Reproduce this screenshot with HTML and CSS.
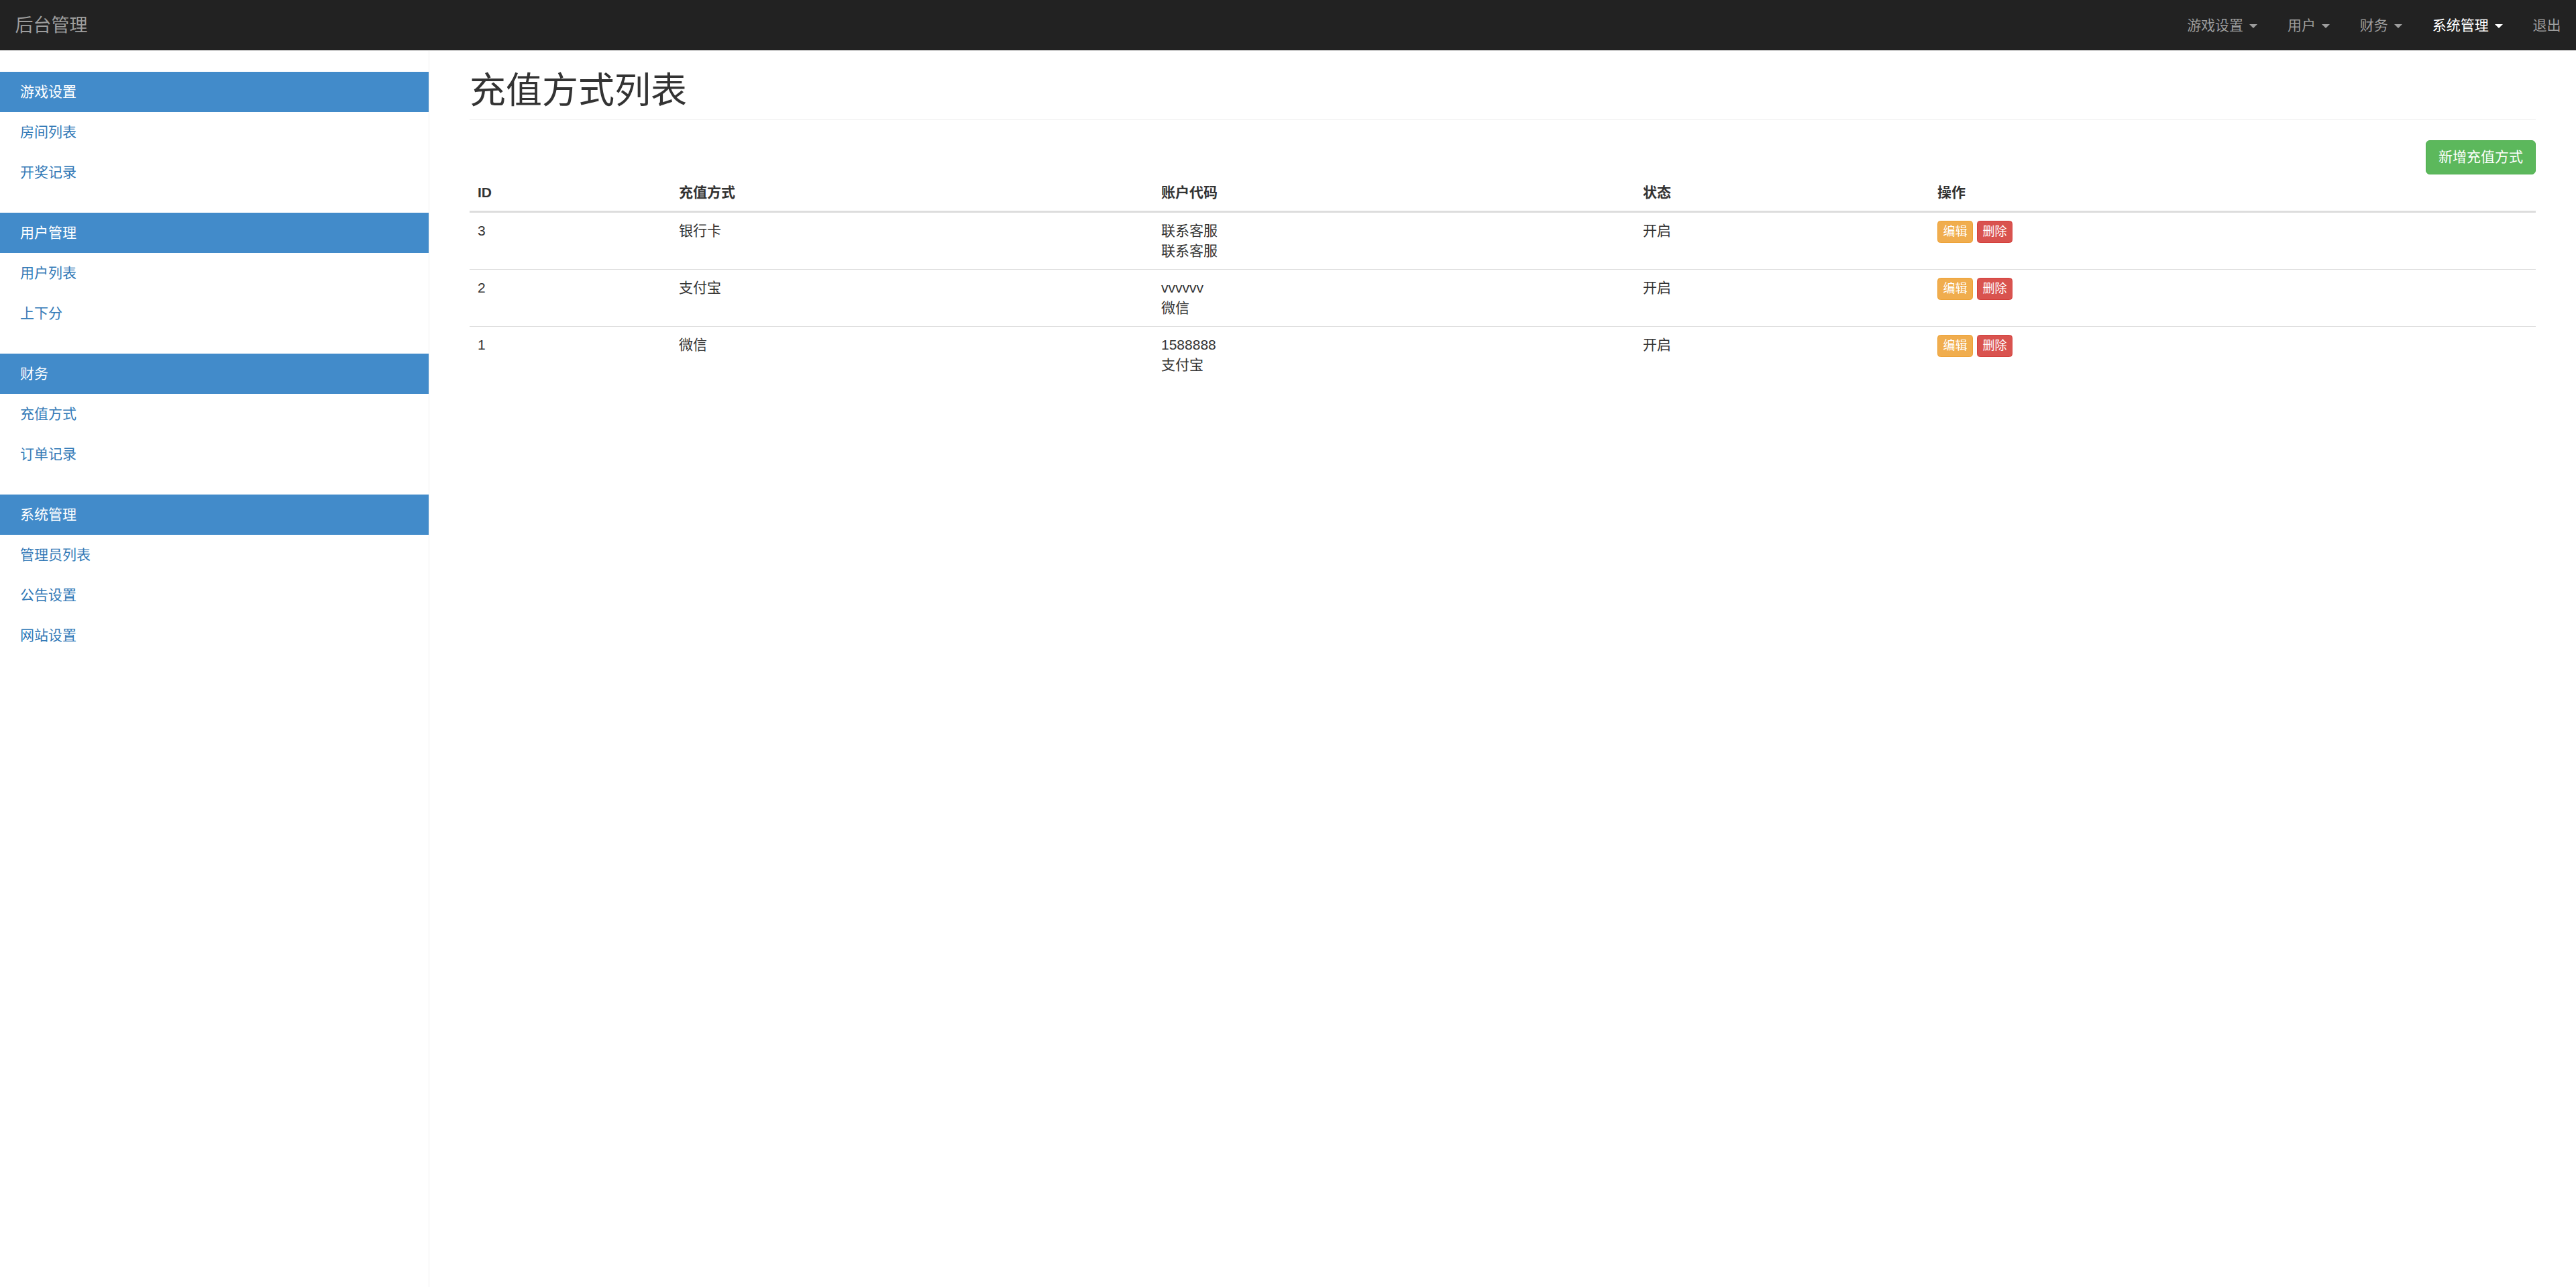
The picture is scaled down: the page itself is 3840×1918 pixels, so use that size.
FILE: index.html
```html
<!DOCTYPE html>
<html lang="zh-CN">
<head>
<meta charset="utf-8">
<title>后台管理</title>
<link rel="stylesheet" href="styles.css">
</head>
<body>
<header class="navbar">
  <a class="brand" href="#">后台管理</a>
  <ul class="nav-right">
    <li><a href="#">游戏设置 <span class="caret"></span></a></li>
    <li><a href="#">用户 <span class="caret"></span></a></li>
    <li><a href="#">财务 <span class="caret"></span></a></li>
    <li><a class="active" href="#">系统管理 <span class="caret"></span></a></li>
    <li><a href="#">退出</a></li>
  </ul>
</header>
<div class="layout">
  <aside class="sidebar">
    <ul class="side-group">
      <li class="side-header">游戏设置</li>
      <li><a href="#">房间列表</a></li>
      <li><a href="#">开奖记录</a></li>
    </ul>
    <ul class="side-group">
      <li class="side-header">用户管理</li>
      <li><a href="#">用户列表</a></li>
      <li><a href="#">上下分</a></li>
    </ul>
    <ul class="side-group">
      <li class="side-header">财务</li>
      <li><a href="#">充值方式</a></li>
      <li><a href="#">订单记录</a></li>
    </ul>
    <ul class="side-group">
      <li class="side-header">系统管理</li>
      <li><a href="#">管理员列表</a></li>
      <li><a href="#">公告设置</a></li>
      <li><a href="#">网站设置</a></li>
    </ul>
  </aside>
  <main class="main">
    <h1 class="page-header">充值方式列表</h1>
    <div class="toolbar">
      <a class="btn btn-success" href="#">新增充值方式</a>
    </div>
    <table class="table">
      <thead>
        <tr>
          <th class="c1">ID</th>
          <th class="c2">充值方式</th>
          <th class="c3">账户代码</th>
          <th class="c4">状态</th>
          <th class="c5">操作</th>
        </tr>
      </thead>
      <tbody>
        <tr>
          <td>3</td>
          <td>银行卡</td>
          <td>联系客服<br>联系客服</td>
          <td>开启</td>
          <td><span class="actions"><a class="btn-xs btn-warning" href="#">编辑</a><a class="btn-xs btn-danger" href="#">删除</a></span></td>
        </tr>
        <tr>
          <td>2</td>
          <td>支付宝</td>
          <td>vvvvvv<br>微信</td>
          <td>开启</td>
          <td><span class="actions"><a class="btn-xs btn-warning" href="#">编辑</a><a class="btn-xs btn-danger" href="#">删除</a></span></td>
        </tr>
        <tr>
          <td>1</td>
          <td>微信</td>
          <td>1588888<br>支付宝</td>
          <td>开启</td>
          <td><span class="actions"><a class="btn-xs btn-warning" href="#">编辑</a><a class="btn-xs btn-danger" href="#">删除</a></span></td>
        </tr>
      </tbody>
    </table>
  </main>
</div>
</body>
</html>
```

FILE: styles.css
```css
* { box-sizing: border-box; }
html, body { margin: 0; padding: 0; }
body {
  font-family: "Liberation Sans", "Noto Sans CJK SC", sans-serif;
  font-size: 21px;
  line-height: 30px;
  color: #333;
  background: #fff;
  min-height: 100vh;
  display: flex;
  flex-direction: column;
}
a { text-decoration: none; }
ul { list-style: none; margin: 0; padding: 0; }

/* navbar */
.navbar {
  height: 76px;
  background: #222;
  border-bottom: 1px solid #fff;
  display: flex;
  align-items: stretch;
  justify-content: space-between;
  flex-shrink: 0;
}
.brand {
  color: #9d9d9d;
  font-size: 27px;
  line-height: 30px;
  padding: 22.5px 22.5px;
  height: 75px;
}
.nav-right { display: flex; }
.nav-right a {
  display: block;
  color: #9d9d9d;
  padding: 22.5px 22.5px;
  line-height: 30px;
}
.nav-right a.active { color: #fff; }
.caret {
  display: inline-block;
  width: 0;
  height: 0;
  margin-left: 3px;
  vertical-align: middle;
  border-top: 6px solid;
  border-right: 6px solid transparent;
  border-left: 6px solid transparent;
}

/* layout */
.layout {
  flex: 1;
  display: flex;
}
.sidebar {
  width: 640px;
  flex-shrink: 0;
  padding-top: 31px;
  border-right: 1px solid #eee;
  background: #fff;
}
.side-group { margin-bottom: 30px; }
.side-group li a,
.side-header {
  display: block;
  padding: 15px 30px;
  line-height: 30px;
}
.side-group li a { color: #337ab7; }
.side-header {
  background: #428bca;
  color: #fff;
}

/* main */
.main {
  flex: 1;
  padding: 31px 60px 30px;
}
.page-header {
  margin: 0 0 30px;
  padding-bottom: 13.5px;
  border-bottom: 1px solid #eee;
  font-size: 54px;
  line-height: 57px;
  font-weight: 400;
  color: #333;
}
.toolbar {
  display: flex;
  justify-content: flex-end;
}
.btn {
  display: inline-block;
  padding: 9.5px 18px;
  font-size: 21px;
  line-height: 30px;
  border: 1px solid transparent;
  border-radius: 6px;
  color: #fff;
}
.btn-success {
  background: #5cb85c;
  border-color: #4cae4c;
}

/* table */
.table {
  width: 100%;
  border-collapse: collapse;
  border-spacing: 0;
}
.table th,
.table td {
  padding: 12px;
  line-height: 30px;
  text-align: left;
  vertical-align: top;
}
.table th {
  font-weight: bold;
  vertical-align: bottom;
  border-bottom: 3px solid #ddd;
}
.table td { border-top: 1px solid #ddd; }
.table tbody tr:first-child td { border-top: 0; }
.c1 { width: 300px; }
.c2 { width: 719px; }
.c3 { width: 718px; }
.c4 { width: 439px; }
.c5 { width: auto; }

.actions {
  display: inline-flex;
  gap: 6px;
  vertical-align: top;
}
.btn-xs {
  display: inline-block;
  padding: 2px 7.5px;
  font-size: 18px;
  line-height: 27px;
  border: 1px solid transparent;
  border-radius: 4.5px;
  color: #fff;
}
.btn-warning {
  background: #f0ad4e;
  border-color: #eea236;
}
.btn-danger {
  background: #d9534f;
  border-color: #d43f3a;
}
```
